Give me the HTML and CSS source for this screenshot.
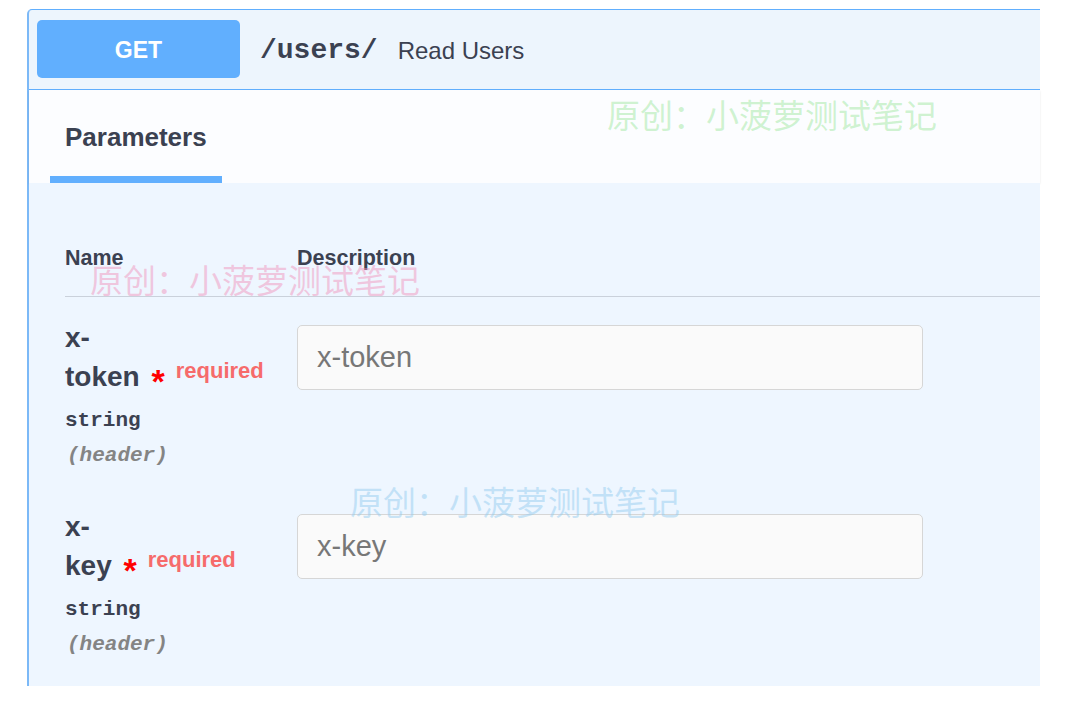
FILE: index.html
```html
<!DOCTYPE html>
<html lang="en">
<head>
	<meta charset="UTF-8">
	<title>Read Users</title>
	<link rel="stylesheet" href="styles.css">
</head>
<body>
	<div class="opblock">
		<div class="summary">
			<span class="method">GET</span>
			<span class="path">/users/</span>
			<span class="summary-desc">Read Users</span>
		</div>
		<div class="tabs">
			<div class="tab">Parameters</div>
		</div>
		<div class="params">
			<table class="param-table">
				<thead>
					<tr>
						<th class="col-name">Name</th>
						<th class="col-desc">Description</th>
					</tr>
				</thead>
				<tbody>
					<tr>
						<td class="col-name">
							<div class="param-name">x-<br>token <span class="star">*</span><span class="required">required</span></div>
							<div class="param-type">string</div>
							<div class="param-in">(header)</div>
						</td>
						<td class="col-desc">
							<input class="param-input" type="text" placeholder="x-token">
						</td>
					</tr>
					<tr>
						<td class="col-name">
							<div class="param-name">x-<br>key <span class="star">*</span><span class="required">required</span></div>
							<div class="param-type">string</div>
							<div class="param-in">(header)</div>
						</td>
						<td class="col-desc">
							<input class="param-input" type="text" placeholder="x-key">
						</td>
					</tr>
				</tbody>
			</table>
		</div>

		<!-- watermarks -->
		<div class="mark mark-green">原创：小菠萝测试笔记</div>
		<div class="mark mark-pink">原创：小菠萝测试笔记</div>
		<div class="mark mark-blue">原创：小菠萝测试笔记</div>
	</div>
</body>
</html>
```

FILE: styles.css
```css
body {
	margin: 0;
	background: #fff;
	font-family: "Liberation Sans", Arial, "Noto Sans CJK SC", sans-serif;
	color: #3b4151;
}
.opblock {
	position: relative;
	width: 1011px;
	margin: 9px 0 0 27px;
	border-top: 1px solid #61affe;
	border-left: 2px solid #7cb9f7;
	border-top-left-radius: 5px;
	background: #edf5fd;
}
.summary {
	display: flex;
	align-items: center;
	padding: 10px 8px 11px;
	border-bottom: 1px solid #61affe;
}
.method {
	width: 203px;
	height: 58px;
	line-height: 60px;
	text-align: center;
	background: #61affe;
	border-radius: 5px;
	color: #fff;
	font-size: 23px;
	font-weight: bold;
}
.path {
	margin-left: 20px;
	padding-top: 3px;
	font-family: "Liberation Mono", "Courier New", monospace;
	font-weight: bold;
	font-size: 28px;
	color: #3b4151;
}
.summary-desc {
	margin-left: 20px;
	padding-top: 3px;
	font-size: 24px;
	color: #3b4151;
}
.tabs {
	display: flex;
	padding-left: 21px;
	background: #fcfdff;
	box-shadow: 0 1px 2px rgba(0, 0, 0, 0.1);
}
.tab {
	padding: 32px 15px 24px;
	line-height: 30px;
	font-size: 26px;
	font-weight: bold;
	border-bottom: 7px solid #61affe;
}
.params {
	padding: 62px 0 11px 36px;
	background: #eef6ff;
}
.param-table {
	width: 100%;
	border-collapse: collapse;
}
.param-table th {
	padding: 0 0 25px;
	line-height: 26px;
	font-size: 21.5px;
	font-weight: bold;
	text-align: left;
	border-bottom: 1px solid #cad1db;
}
.param-table td {
	padding: 21px 0 13px;
	vertical-align: top;
}
.col-name {
	width: 232px;
}
.param-name {
	font-size: 28px;
	font-weight: bold;
	line-height: 39px;
	color: #3b4151;
}
.star {
	position: relative;
	top: 7px;
	margin-left: 4px;
	color: #f00;
	font-size: 34px;
	line-height: 1;
}
.required {
	position: relative;
	top: -8px;
	margin-left: 11px;
	font-size: 22px;
	font-weight: bold;
	color: #f66b6b;
}
.param-type {
	margin-top: 5px;
	line-height: 35px;
	font-family: "Liberation Mono", "Courier New", monospace;
	font-weight: bold;
	font-size: 21px;
}
.param-in {
	padding-left: 2px;
	line-height: 35px;
	font-family: "Liberation Mono", "Courier New", monospace;
	font-weight: bold;
	font-style: italic;
	font-size: 21px;
	color: #848484;
}
.param-input {
	display: block;
	box-sizing: border-box;
	width: 626px;
	height: 65px;
	margin-top: 7px;
	padding: 0 19px;
	background: #fafafa;
	border: 1px solid #d6d6d6;
	border-radius: 5px;
	font-family: "Liberation Sans", Arial, sans-serif;
	font-size: 29px;
	color: #3b4151;
}
.param-input::placeholder {
	color: #777;
}
.mark {
	position: absolute;
	font-family: "Noto Sans CJK SC", sans-serif;
	font-size: 33px;
	line-height: 36px;
	white-space: nowrap;
	pointer-events: none;
}
.mark-green {
	left: 578px;
	top: 86px;
	color: rgba(150, 230, 150, 0.45);
}
.mark-pink {
	left: 61px;
	top: 251px;
	color: rgba(240, 150, 190, 0.5);
}
.mark-blue {
	left: 321px;
	top: 473px;
	color: rgba(150, 205, 240, 0.5);
}
```
